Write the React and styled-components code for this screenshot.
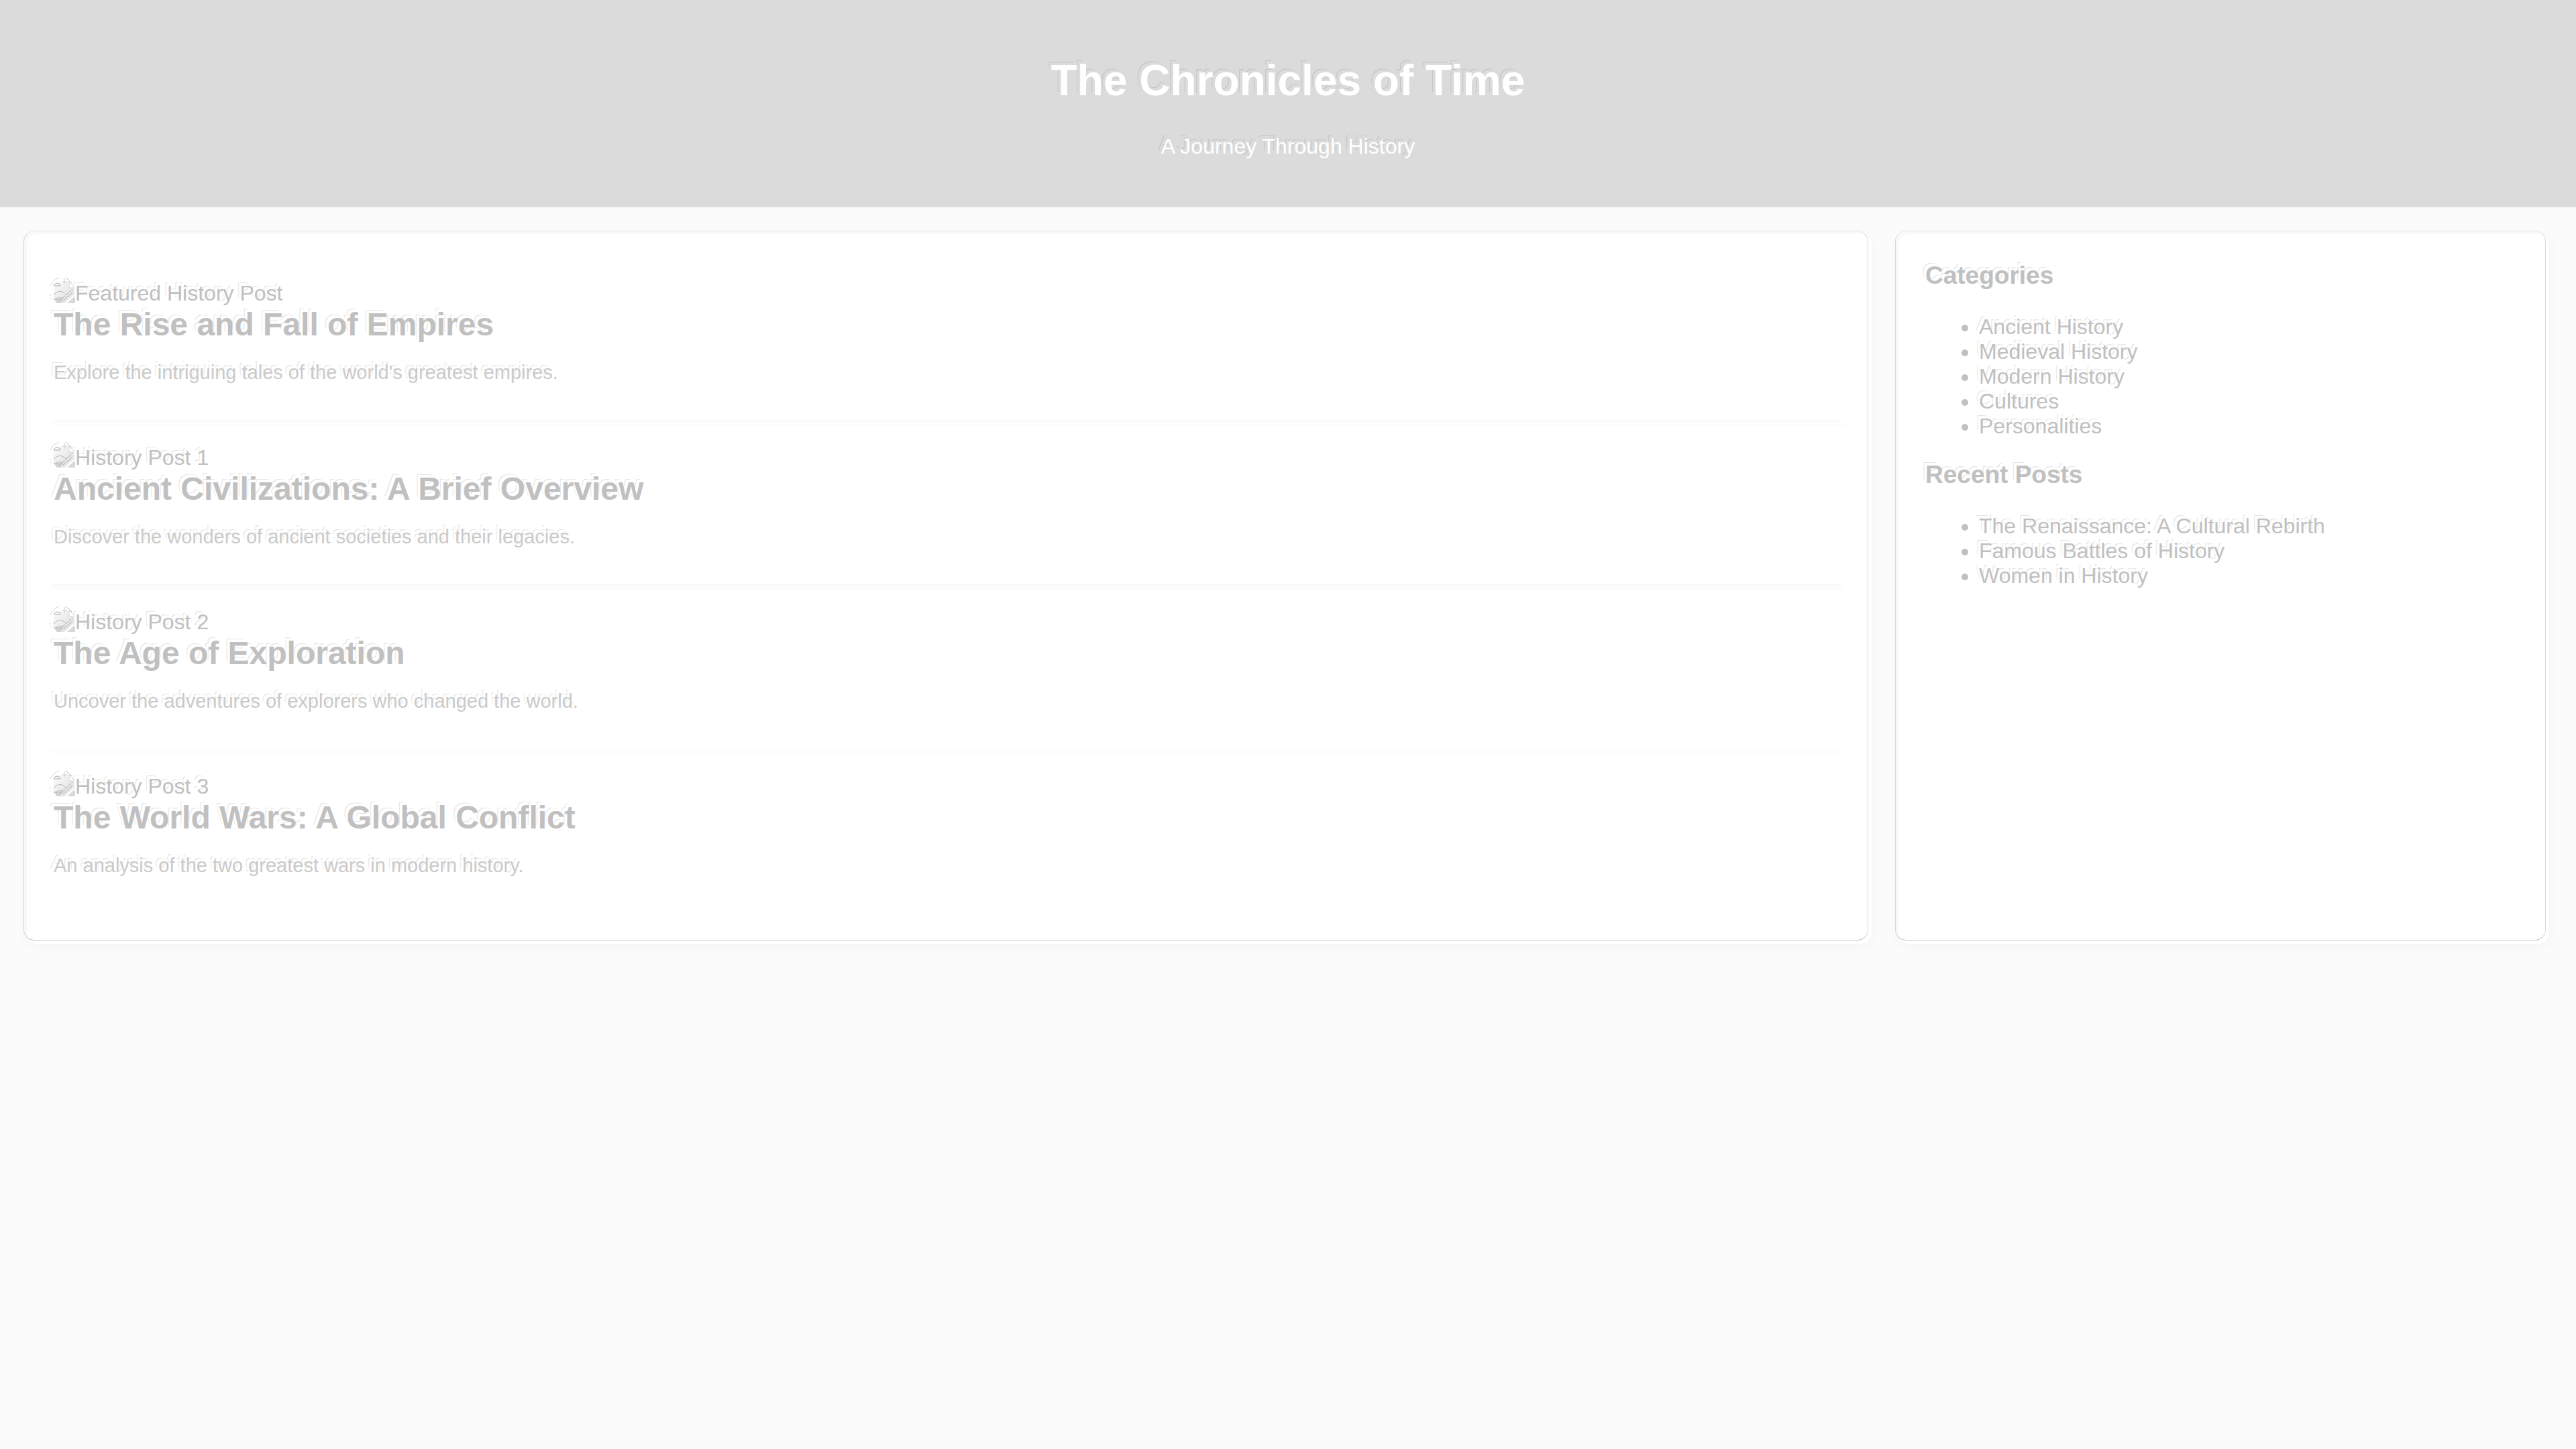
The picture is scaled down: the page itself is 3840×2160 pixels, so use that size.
import React from "react";
import styled, { createGlobalStyle } from "styled-components";

const GlobalStyle = createGlobalStyle`
  body {
    margin: 0;
    background: #fbfbfb;
    color: #c0c0c0;
    font-family: "Liberation Sans", Arial, sans-serif;
    font-size: 32px;
    line-height: 37px;
  }
`;

/* Engraved look: a thin contour up and to the left of the letters. */
const engraved = (paper, line) =>
  `text-shadow: -4px -4px 0 ${paper}, -5px -5px 0 ${line};`;

const Header = styled.header`
  padding: 40px;
  background: #dbdbdb;
  color: #ffffff;
  text-align: center;
  ${engraved("#dbdbdb", "#c4c4c4")}
`;

const SiteTitle = styled.h1`
  margin: 43px 0;
  font-size: 64px;
  line-height: 74px;
`;

const Tagline = styled.p`
  margin: 0 0 32px;
`;

const Layout = styled.div`
  display: flex;
  gap: 40px;
  padding: 40px;
`;

const Card = styled.div`
  position: relative;
  flex: ${(p) => p.$grow};
  padding: 40px;
  border-radius: 16px;
  background: #ffffff;
  box-shadow: 0 4px 20px rgba(0, 0, 0, 0.03);
  ${engraved("#ffffff", "#e4e4e4")}

  &::before {
    content: "";
    position: absolute;
    inset: -5px 5px 5px -5px;
    border: 1px solid;
    border-color: #e8e8e8 #dcdcdc #c8c8c8 #d6d6d6;
    border-radius: 16px;
    pointer-events: none;
  }
`;

const Post = styled.article`
  position: relative;
  padding: 30px 0;
  border-bottom: 2px solid #fbfbfb;

  &::after {
    content: "";
    position: absolute;
    inset: auto 6px 2px -4px;
    height: 2px;
    border: solid #f6f6f6;
    border-width: 1px 0;
  }

  &:last-child {
    border-bottom: 0;
  }

  &:last-child::after {
    display: none;
  }
`;

const Picture = styled.div`
  display: flex;
  align-items: flex-start;
  height: 37px;
`;

const PictureIcon = styled.svg`
  flex: none;
  width: 32px;
  height: 32px;
  overflow: visible;
`;

const PostTitle = styled.h2`
  margin: 0 0 28px;
  font-size: 48px;
  line-height: 55px;
`;

const Summary = styled.p`
  margin: 0 0 30px;
  color: #cacaca;
  font-size: 29px;
  line-height: 33px;
`;

const SideTitle = styled.h3`
  margin: 0 0 37px;
  font-size: 37px;
  line-height: 43px;
`;

const SideList = styled.ul`
  margin: 0 0 32px;
  padding-left: 80px;
`;

function BrokenPicture() {
  return (
    <PictureIcon viewBox="0 0 32 32" aria-hidden="true">
      <defs>
        <linearGradient id="sheet" x1="0" y1="0" x2="1" y2="1">
          <stop offset="0" stopColor="#fbfbfb" />
          <stop offset="1" stopColor="#dcdcdc" />
        </linearGradient>
      </defs>
      <path d="M0 10Q6 1 14 1H23L32 10V18L16 33H5L0 27Z" fill="url(#sheet)" />
      <path d="M20 33L32 22V33Z" fill="#d8d8d8" />
      <path d="M1 27Q8 21 15 25L10 33H5Z" fill="#d2d2d2" />
      <path d="M23 1V10H32Z" fill="#ffffff" stroke="#d4d4d4" />
      <g fill="none" stroke="#aaaaaa">
        <path d="M-5 7Q-1 -2 8 -5" stroke="#d4d4d4" />
        <path d="M-5 20Q-6 25 -2 28" stroke="#cccccc" strokeDasharray="2 3" />
        <path d="M18 -5L27 3" stroke="#b4b4b4" />
        <path d="M16 -4V5M13 1H20" stroke="#cccccc" />
        <path d="M0 7Q2 2 6 3Q10 4 10 7Z" />
        <path d="M0 21Q9 10 19 21" strokeDasharray="4 1" />
        <path d="M9 29L28 12M14 29L28 17" strokeDasharray="5 1" />
        <path d="M0 27H7" strokeDasharray="2 1" />
      </g>
    </PictureIcon>
  );
}

const posts = [
  {
    picture: "Featured History Post",
    title: "The Rise and Fall of Empires",
    summary: "Explore the intriguing tales of the world's greatest empires.",
  },
  {
    picture: "History Post 1",
    title: "Ancient Civilizations: A Brief Overview",
    summary: "Discover the wonders of ancient societies and their legacies.",
  },
  {
    picture: "History Post 2",
    title: "The Age of Exploration",
    summary: "Uncover the adventures of explorers who changed the world.",
  },
  {
    picture: "History Post 3",
    title: "The World Wars: A Global Conflict",
    summary: "An analysis of the two greatest wars in modern history.",
  },
];

const sections = [
  {
    title: "Categories",
    items: [
      "Ancient History",
      "Medieval History",
      "Modern History",
      "Cultures",
      "Personalities",
    ],
  },
  {
    title: "Recent Posts",
    items: [
      "The Renaissance: A Cultural Rebirth",
      "Famous Battles of History",
      "Women in History",
    ],
  },
];

export default function App() {
  return (
    <>
      <GlobalStyle />
      <Header>
        <SiteTitle>The Chronicles of Time</SiteTitle>
        <Tagline>A Journey Through History</Tagline>
      </Header>
      <Layout>
        <Card as="main" $grow={3}>
          {posts.map((post) => (
            <Post key={post.title}>
              <Picture>
                <BrokenPicture />
                <span>{post.picture}</span>
              </Picture>
              <PostTitle>{post.title}</PostTitle>
              <Summary>{post.summary}</Summary>
            </Post>
          ))}
        </Card>
        <Card as="aside" $grow={1}>
          {sections.map((section) => (
            <section key={section.title}>
              <SideTitle>{section.title}</SideTitle>
              <SideList>
                {section.items.map((item) => (
                  <li key={item}>{item}</li>
                ))}
              </SideList>
            </section>
          ))}
        </Card>
      </Layout>
    </>
  );
}
